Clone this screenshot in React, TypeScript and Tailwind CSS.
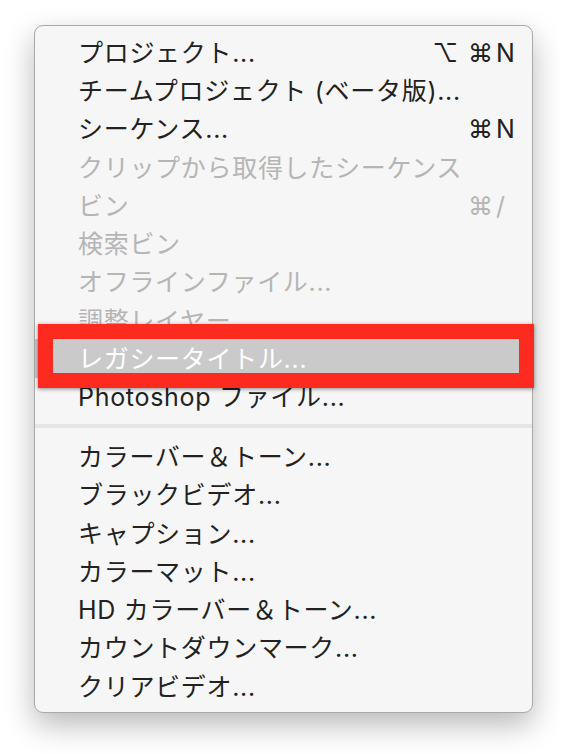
import React from "react";

type Item = {
  label: React.ReactNode;
  mods?: string[];
  keyChar?: string;
  disabled?: boolean;
  highlighted?: boolean;
};

const top: Item[] = [
  { label: "プロジェクト...", mods: ["⌥", "⌘"], keyChar: "N" },
  { label: "チームプロジェクト (ベータ版)..." },
  { label: "シーケンス...", mods: ["⌘"], keyChar: "N" },
  { label: "クリップから取得したシーケンス", disabled: true },
  { label: "ビン", mods: ["⌘"], keyChar: "/", disabled: true },
  { label: "検索ビン", disabled: true },
  { label: "オフラインファイル...", disabled: true },
  { label: "調整レイヤー", disabled: true },
  { label: "レガシータイトル...", highlighted: true },
  { label: "Photoshop ファイル..." },
];

const bottom: Item[] = [
  { label: "カラーバー＆トーン..." },
  { label: "ブラックビデオ..." },
  { label: "キャプション..." },
  { label: "カラーマット..." },
  { label: "HD カラーバー＆トーン..." },
  { label: "カウントダウンマーク..." },
  { label: "クリアビデオ..." },
];

function Row({ item }: { item: Item }) {
  const color = item.highlighted
    ? "text-white bg-[#cacaca]"
    : item.disabled
    ? "text-[#b5b5b5]"
    : "text-[#222222]";
  return (
    <div
      className={`flex h-[38.3px] items-center pl-[43px] pr-[18px] pt-[2px] ${color}`}
    >
      <div className="flex-1 whitespace-nowrap tracking-[0.7px]">{item.label}</div>
      {item.keyChar && (
        <div className="flex items-center font-['Inter','DejaVu_Sans',sans-serif]">
          <div className="flex gap-[10px]">
            {item.mods?.map((m, i) => (
              <span key={i}>{m}</span>
            ))}
          </div>
          <span className="w-[21px] pl-[3px] text-left">{item.keyChar}</span>
        </div>
      )}
    </div>
  );
}

export default function App() {
  return (
    <div className="min-h-[754px] w-[566px] bg-white pl-[34px] pt-[25px] font-['Inter','Noto_Sans_CJK_JP',sans-serif] text-[25px] leading-none">
      <div className="relative w-[499px] rounded-[9px] border border-[#a9a9a9] bg-[#f6f6f6] py-[7px] shadow-[0_12px_30px_rgba(0,0,0,0.28)]">
        {top.map((it, i) => (
          <Row key={i} item={it} />
        ))}
        <div className="h-[21.3px] pt-[8px]">
          <div className="h-[4px] bg-[#e5e5e5]" />
        </div>
        {bottom.map((it, i) => (
          <Row key={i} item={it} />
        ))}
        <div className="absolute left-[3px] top-[298px] h-[64px] w-[496px] border-[15px] border-[#fd2a20] shadow-[0_1px_4px_rgba(0,0,0,0.45)]" />
      </div>
    </div>
  );
}
